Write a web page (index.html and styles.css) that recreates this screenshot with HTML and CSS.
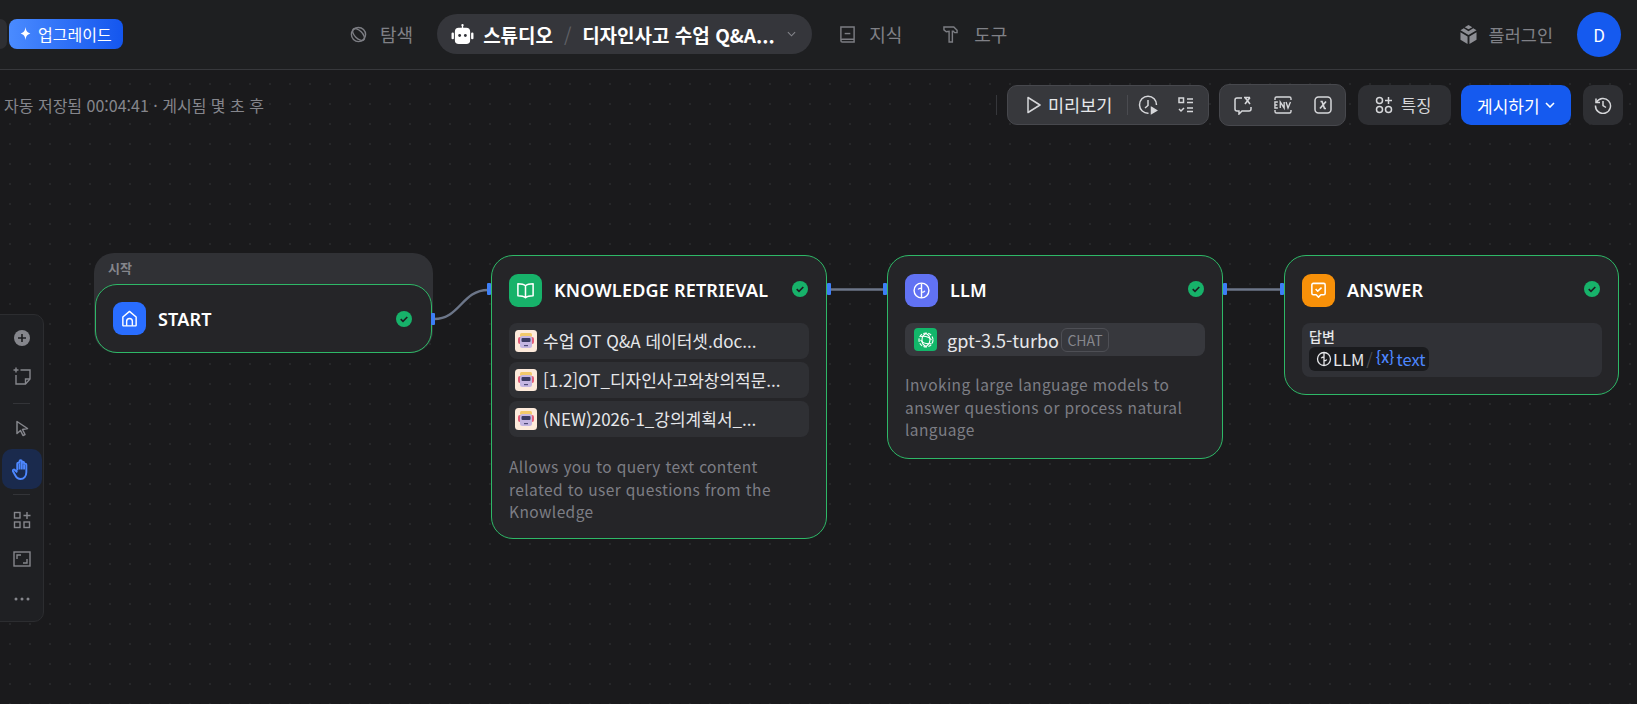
FILE: index.html
```html
<!DOCTYPE html>
<html lang="ko">
<head>
<meta charset="utf-8">
<title>디자인사고 수업 Q&amp;A</title>
<link rel="stylesheet" href="styles.css">
</head>
<body>
<header class="topbar">
  <div class="top-left">
    <span class="stub"></span>
    <a class="upgrade"><svg class="spark" viewBox="0 0 12 12"><path d="M6 0c.5 3.600 1.400 5 4.500 6C7.400 7 6.500 8.400 6 12 5.500 8.400 4.600 7 1.500 6 4.600 5 5.500 3.600 6 0z" fill="#fff"/></svg>업그레이드</a>
  </div>
  <nav class="top-nav">
    <a class="nav-link nav-explore"><svg class="nav-ico" viewBox="0 0 18 18" fill="none" stroke="#7c7d83" stroke-width="1.500"><circle cx="9" cy="9" r="7.500"/><ellipse cx="9" cy="9" rx="8" ry="4" transform="rotate(45 9 9)"/></svg>탐색</a>
    <div class="studio">
      <svg class="robot" viewBox="0 0 24 22"><path d="M12 0a1.200 1.200 0 0 1 .7 2.200V4h3.300a4 4 0 0 1 4 4v9a4 4 0 0 1-4 4H8a4 4 0 0 1-4-4V8a4 4 0 0 1 4-4h3.300V2.200A1.200 1.200 0 0 1 12 0z" fill="#fff"/><rect x="0.500" y="9" width="2.500" height="7" rx="1.200" fill="#fff"/><rect x="21" y="9" width="2.500" height="7" rx="1.200" fill="#fff"/><circle cx="9" cy="12" r="1.500" fill="#33343a"/><circle cx="15" cy="12" r="1.500" fill="#33343a"/></svg>
      <span class="studio-label">스튜디오</span>
      <span class="studio-sep">/</span>
      <span class="studio-title">디자인사고 수업 Q&amp;A...</span>
      <svg class="studio-chev" viewBox="0 0 10 6" fill="none" stroke="#85868c" stroke-width="1.200"><path d="M1 1l4 4 4-4"/></svg>
    </div>
    <a class="nav-link nav-know"><svg class="nav-ico" viewBox="0 0 18 20" fill="none" stroke="#7c7d83" stroke-width="1.500"><path d="M2 16V2h14v16H3.500A1.500 1.500 0 0 1 2 16.500 1.500 1.500 0 0 1 3.500 15H16"/><path d="M6 9h6"/></svg>지식</a>
    <a class="nav-link nav-tool"><svg class="nav-ico nav-ico-s" viewBox="0 0 16 20" fill="none" stroke="#7c7d83" stroke-width="1.500"><path d="M1 2h10.500L15 5.500v2.500h-2.500L11 6.500H10V18H6.500V6.500L3.500 7 1 5z"/></svg>도구</a>
  </nav>
  <div class="top-right">
    <a class="plugin"><svg class="plugin-ico" viewBox="0 0 18 20"><path d="M9 0l4 2.200L9 4.500 5 2.200z" fill="#8d8e94"/><path d="M9 6.500l5-3 3.500 2L9 10.500.5 5.500l3.500-2z" fill="#8d8e94"/><path d="M.5 7.500l7.500 4.500v8L.5 15.500zM17.500 7.500L10 12v8l7.500-4.500z" fill="#8d8e94"/></svg>플러그인</a>
    <span class="avatar">D</span>
  </div>
</header>

<main class="canvas">
  <div class="canvas-head">
    <p class="status">자동 저장됨 00:04:41 · 게시됨 몇 초 후</p>
    <div class="actions">
      <span class="act-sep"></span>
      <div class="group group-preview">
        <button class="preview-btn"><svg class="ico-16" viewBox="0 0 14 18" fill="none" stroke="#d6d7da" stroke-width="1.500"><path d="M1 1.500L13 9 1 16.500z" stroke-linejoin="round"/></svg>미리보기</button>
        <span class="group-div"></span>
        <svg class="ico-20 clock" viewBox="0 0 20 20" fill="none" stroke="#d6d7da" stroke-width="1.500"><path d="M10.500 18.200A8.500 8.500 0 1 1 18.500 10"/><path d="M10 5v5.500L7 13"/><path d="M13.500 12.500l5 3-5 3z" fill="#d6d7da"/></svg>
        <svg class="ico-18" viewBox="0 0 18 18" fill="none" stroke="#d6d7da" stroke-width="1.500"><rect x="2" y="2" width="4.500" height="4.500"/><path d="M10 3h6M10 6.500h6M10 12h6M10 15.500h6M2 13l2 2 3-3"/></svg>
      </div>
      <div class="group group-vars">
        <svg class="ico-20" viewBox="0 0 20 20" fill="none" stroke="#d6d7da" stroke-width="1.500"><path d="M9 3H4a2 2 0 0 0-2 2v9a2 2 0 0 0 2 2h2v3l3-3h7a2 2 0 0 0 2-2v-2"/><path d="M11 2.500h6M12 9l5-6.500M12 2.500L17 9" stroke-width="1.600"/></svg>
        <svg class="ico-22" viewBox="0 0 22 20" fill="none" stroke="#d6d7da" stroke-width="1.400"><path d="M3 5V3.500A1.500 1.500 0 0 1 4.500 2h13A1.500 1.500 0 0 1 19 3.500V5M3 15v1.500A1.500 1.500 0 0 0 4.500 18h13a1.500 1.500 0 0 0 1.500-1.500V15"/><path d="M5.500 7H2.500v6h3M2.500 10h2.500M8 13V7l4 6V7M14 7l2 6 2.500-6" transform="translate(.5 0) scale(.97 1)"/></svg>
        <svg class="ico-20" viewBox="0 0 20 20" fill="none" stroke="#d6d7da" stroke-width="1.500"><rect x="2" y="2" width="16" height="16" rx="3.500"/><path d="M7.500 6.500h1.500l2.500 7h1.500M13 6.500l-6 7" stroke-width="1.700"/></svg>
      </div>
      <button class="feature"><svg class="ico-18" viewBox="0 0 18 18" fill="none" stroke="#d6d7da" stroke-width="1.500"><circle cx="4.500" cy="4.500" r="3"/><circle cx="4.500" cy="13.500" r="3"/><circle cx="13.500" cy="13.500" r="3"/><path d="M13.500 1v7M10 4.500h7"/></svg>특징</button>
      <button class="publish">게시하기<svg class="pub-chev" viewBox="0 0 10 6" fill="none" stroke="#fff" stroke-width="1.600"><path d="M1 1l4 4 4-4"/></svg></button>
      <button class="history"><svg class="ico-18" viewBox="0 0 18 18" fill="none" stroke="#d6d7da" stroke-width="1.500"><path d="M2 2.500v4h4"/><path d="M2.300 6.500A7.500 7.500 0 1 1 1.500 9.500"/><path d="M9 5v4.500l3 2"/></svg></button>
    </div>
  </div>

  <svg class="edges" viewBox="0 0 1637 635" fill="none">
    <path class="edge" d="M434 249C460 249 462 220 488 220"/>
    <path class="edge" d="M827 219.500H887"/>
    <path class="edge" d="M1223 219.500H1284"/>
  </svg>

  <aside class="tools">
    <svg class="tool-ico" viewBox="0 0 18 18"><circle cx="9" cy="9" r="8" fill="#85868c"/><path d="M9 5v8M5 9h8" stroke="#1d1e20" stroke-width="1.600"/></svg>
    <svg class="tool-ico" viewBox="0 0 18 18" fill="none" stroke="#85868c" stroke-width="1.400"><path d="M7.500 3H17v9l-4.500 5H3V8"/><path d="M12.500 17v-5H17M3 .5v5M.5 3h5"/></svg>
    <span class="tool-div"></span>
    <svg class="tool-ico" viewBox="0 0 18 18" fill="none" stroke="#85868c" stroke-width="1.500"><path d="M4 1.500l10.500 7-5 1 2.500 5-2 1-2.500-5L4 13.500z" stroke-linejoin="round"/></svg>
    <span class="tool-active"><svg class="tool-hand" viewBox="0 0 20 22" fill="none" stroke="#4d87ff" stroke-width="2" stroke-linejoin="round"><path d="M5.500 12V5a1.200 1.200 0 0 1 2.400 0M7.900 5V2.500a1.200 1.200 0 0 1 2.400 0V5M10.300 4a1.200 1.200 0 0 1 2.400 0v2M12.700 6a1.200 1.200 0 0 1 2.400 0v8c0 4-2.600 7-6.100 7-2.900 0-4.300-1.500-5.600-4L1 12.800c-.6-1.300 1-2.300 2-1.300l2.500 2.500"/><path d="M7.900 5v6M10.300 4v7M12.700 6v5"/></svg></span>
    <span class="tool-div"></span>
    <svg class="tool-ico" viewBox="0 0 18 18" fill="none" stroke="#85868c" stroke-width="1.400"><rect x="1.500" y="1.500" width="5.500" height="5.500"/><rect x="1.500" y="11" width="5.500" height="5.500"/><rect x="11" y="11" width="5.500" height="5.500"/><path d="M14 1v7M10.500 4.500h7"/></svg>
    <svg class="tool-ico" viewBox="0 0 18 18" fill="none" stroke="#85868c" stroke-width="1.400"><rect x="1" y="2" width="16" height="14"/><path d="M4 9V5h4M14 9v4h-4"/></svg>
    <svg class="tool-ico" viewBox="0 0 18 18" fill="#85868c"><circle cx="3" cy="9" r="1.500"/><circle cx="9" cy="9" r="1.500"/><circle cx="15" cy="9" r="1.500"/></svg>
  </aside>

  <div class="start-group">
    <span class="start-label">시작</span>
    <section class="node node-start">
      <div class="node-head">
        <span class="node-ico bg-blue"><svg viewBox="0 0 20 20" fill="none" stroke="#fff" stroke-width="1.500" stroke-linejoin="round"><path d="M3 8.500L10 2.500l7 6V17a.8.8 0 0 1-.8.8H3.800A.8.8 0 0 1 3 17z"/><path d="M7 17.500V13a3 3 0 0 1 6 0v4.500"/></svg></span>
        <h3 class="node-title">START</h3>
        <svg class="check" viewBox="0 0 16 16"><circle cx="8" cy="8" r="8" fill="#17b26a"/><path d="M4.700 8.200l2.300 2.200 4.300-4.400" fill="none" stroke="#1d1e22" stroke-width="1.600"/></svg>
      </div>
    </section>
    <span class="handle handle-start"></span>
  </div>

  <section class="node node-kr">
    <span class="handle handle-in"></span>
    <span class="handle handle-out"></span>
    <div class="node-head">
      <span class="node-ico bg-green"><svg viewBox="0 0 20 20" fill="none" stroke="#fff" stroke-width="1.600" stroke-linejoin="round"><path d="M10 5c-1.500-1.300-4-2-8-2v12.500c4 0 6.500.7 8 2 1.500-1.300 4-2 8-2V3c-4 0-6.500.7-8 2zM10 5v12.500"/></svg></span>
      <h3 class="node-title">KNOWLEDGE RETRIEVAL</h3>
      <svg class="check" viewBox="0 0 16 16"><circle cx="8" cy="8" r="8" fill="#17b26a"/><path d="M4.700 8.200l2.300 2.200 4.300-4.400" fill="none" stroke="#1d1e22" stroke-width="1.600"/></svg>
    </div>
    <ul class="files">
      <li class="file"><svg class="bot" viewBox="0 0 22 22"><rect width="22" height="22" rx="3.500" fill="#fdeadb"/><rect x="5" y="3" width="12" height="4" rx="1.500" fill="#f2c96b"/><rect x="3" y="7" width="16" height="7" rx="2" fill="#e25d78"/><rect x="5" y="6" width="12" height="12" rx="2.500" fill="#c4b6e2"/><rect x="6.500" y="8" width="9" height="4" rx="1" fill="#3a3b63"/><rect x="9" y="15" width="4" height="1.200" fill="#4e4a78"/></svg><span class="file-name">수업 OT Q&amp;A 데이터셋.doc...</span></li>
      <li class="file"><svg class="bot" viewBox="0 0 22 22"><rect width="22" height="22" rx="3.500" fill="#fdeadb"/><rect x="5" y="3" width="12" height="4" rx="1.500" fill="#f2c96b"/><rect x="3" y="7" width="16" height="7" rx="2" fill="#e25d78"/><rect x="5" y="6" width="12" height="12" rx="2.500" fill="#c4b6e2"/><rect x="6.500" y="8" width="9" height="4" rx="1" fill="#3a3b63"/><rect x="9" y="15" width="4" height="1.200" fill="#4e4a78"/></svg><span class="file-name">[1.2]OT_디자인사고와창의적문...</span></li>
      <li class="file"><svg class="bot" viewBox="0 0 22 22"><rect width="22" height="22" rx="3.500" fill="#fdeadb"/><rect x="5" y="3" width="12" height="4" rx="1.500" fill="#f2c96b"/><rect x="3" y="7" width="16" height="7" rx="2" fill="#e25d78"/><rect x="5" y="6" width="12" height="12" rx="2.500" fill="#c4b6e2"/><rect x="6.500" y="8" width="9" height="4" rx="1" fill="#3a3b63"/><rect x="9" y="15" width="4" height="1.200" fill="#4e4a78"/></svg><span class="file-name">(NEW)2026-1_강의계획서_...</span></li>
    </ul>
    <p class="desc">Allows you to query text content related to user questions from the Knowledge</p>
  </section>

  <section class="node node-llm">
    <span class="handle handle-in"></span>
    <span class="handle handle-out"></span>
    <div class="node-head">
      <span class="node-ico bg-indigo"><svg viewBox="0 0 20 20" fill="none" stroke="#fff" stroke-width="1.500"><circle cx="10" cy="10" r="7.800"/><path d="M10 2.500v15M10 7.500c-1.500 0-3 .3-3.500 1.500M10 12c1.500 0 3-.5 3.500-1.800"/></svg></span>
      <h3 class="node-title">LLM</h3>
      <svg class="check" viewBox="0 0 16 16"><circle cx="8" cy="8" r="8" fill="#17b26a"/><path d="M4.700 8.200l2.300 2.200 4.300-4.400" fill="none" stroke="#1d1e22" stroke-width="1.600"/></svg>
    </div>
    <div class="model">
      <span class="model-ico"><svg viewBox="0 0 20 20" fill="none" stroke="#fff" stroke-width="1.100"><circle cx="10" cy="10" r="7" stroke-dasharray="3.500 1.500"/><path d="M10 3.500c2.500 1.500 4 2.500 4 6.500s-2 5-4 6.500c-2.500-1.500-4-2.500-4-6.500s1.500-5 4-6.500z"/><path d="M4.500 6.500c3-.5 8-.5 11 3.500M15.500 13.500c-3 .5-8 .5-11-3.500"/></svg></span>
      <span class="model-name">gpt-3.5-turbo</span>
      <span class="chat">CHAT</span>
    </div>
    <p class="desc desc-llm">Invoking large language models to answer questions or process natural language</p>
  </section>

  <section class="node node-answer">
    <span class="handle handle-in"></span>
    <div class="node-head">
      <span class="node-ico bg-orange"><svg viewBox="0 0 20 20" fill="none" stroke="#fff" stroke-width="1.600" stroke-linejoin="round"><path d="M4.500 2.500h11a1.500 1.500 0 0 1 1.500 1.500v9a1.500 1.500 0 0 1-1.500 1.500H12.500L10 17l-2.500-2.500h-3A1.500 1.500 0 0 1 3 13V4a1.500 1.500 0 0 1 1.500-1.500z"/><path d="M7 8.500l2.200 2.200L13.200 7"/></svg></span>
      <h3 class="node-title">ANSWER</h3>
      <svg class="check" viewBox="0 0 16 16"><circle cx="8" cy="8" r="8" fill="#17b26a"/><path d="M4.700 8.200l2.300 2.200 4.300-4.400" fill="none" stroke="#1d1e22" stroke-width="1.600"/></svg>
    </div>
    <div class="answer-box">
      <span class="answer-label">답변</span>
      <span class="var-pill">
        <svg class="var-ico" viewBox="0 0 16 16" fill="none" stroke="#e6e7ea" stroke-width="1.300"><circle cx="8" cy="8" r="6.500"/><path d="M8 2v12M8 6c-1.200 0-2.300.3-2.700 1.200M8 10c1.200 0 2.300-.4 2.700-1.400"/></svg>
        <span class="var-node">LLM</span><span class="var-sep">/</span><span class="var-x">{x}</span><span class="var-text">text</span>
      </span>
    </div>
  </section>
</main>
</body>
</html>
```

FILE: styles.css
```css
* { box-sizing: border-box; }
html, body { margin: 0; padding: 0; height: 100%; }
body {
  width: 1637px;
  height: 704px;
  overflow: hidden;
  background: #1a1a1c;
  font-family: "Noto Sans CJK KR", "Noto Sans", sans-serif;
  color: #e6e7ea;
  font-size: 14px;
}
svg { display: block; flex: none; }
button { font: inherit; border: 0; color: inherit; padding: 0; }
h3, p, ul { margin: 0; padding: 0; }
ul { list-style: none; }

/* top bar */
.topbar {
  height: 70px;
  padding-bottom: 1px;
  display: flex;
  align-items: center;
  background: #1e1f21;
  border-bottom: 1px solid #37383c;
  position: relative;
}
.top-left { display: flex; align-items: center; gap: 2px; width: 350px; flex: none; margin-top: -1px; }
.stub { width: 7px; height: 30px; background: #2e2f33; border-radius: 0 8px 8px 0; }
.upgrade {
  display: flex;
  align-items: center;
  gap: 6px;
  width: 114px;
  height: 30px;
  padding-left: 10px;
  border-radius: 8px;
  background: linear-gradient(90deg, #4a8bff, #1456ee);
  color: #fff;
  font-size: 16px;
  line-height: 20px;
  white-space: nowrap;
}
.spark { width: 13px; height: 13px; }
.top-nav { display: flex; align-items: center; }
.nav-link { display: flex; align-items: center; color: #808187; font-size: 18px; line-height: 24px; white-space: nowrap; }
.nav-ico { width: 17px; height: 19px; margin-right: 13px; }
.nav-ico-s { width: 15px; margin-right: 16px; }
.nav-explore { margin-right: 24px; }
.nav-know { margin-left: 27px; margin-right: 41px; }
.studio {
  width: 375px;
  height: 40px;
  padding-left: 14px;
  display: flex;
  align-items: center;
  background: #35363b;
  border-radius: 20px;
  color: #fff;
  font-weight: 700;
  font-size: 19px;
  white-space: nowrap;
}
.robot { width: 23px; height: 21px; margin-right: 9px; }
.studio-label { width: 70px; }
.studio-sep { width: 29px; text-align: center; color: #5f6066; font-weight: 400; }
.studio-title { width: 193px; }
.studio-chev { width: 9px; height: 6px; margin-left: 12px; }
.top-right { display: flex; align-items: center; margin-left: auto; padding-right: 16px; }
.plugin { display: flex; align-items: center; gap: 12px; color: #808187; font-size: 17.500px; margin-right: 24px; white-space: nowrap; }
.plugin-ico { width: 17px; height: 19px; }
.avatar {
  width: 44px;
  height: 45px;
  border-radius: 50%;
  background: #155aef;
  color: #fff;
  font-size: 17px;
  display: flex;
  align-items: center;
  justify-content: center;
}

/* canvas */
.canvas {
  position: relative;
  height: 634px;
  overflow: hidden;
  background-color: #1a1a1c;
  background-image: radial-gradient(circle, #262729 0.9px, transparent 1.1px);
  background-size: 20px 20px;
  background-position: 0 4px;
}
.canvas-head {
  position: relative;
  z-index: 2;
  display: flex;
  align-items: center;
  justify-content: space-between;
  height: 42px;
  margin-top: 14px;
  padding: 0 14px 0 4px;
}
.status { color: #85868c; font-size: 16px; line-height: 20px; white-space: nowrap; }
.actions { display: flex; align-items: center; }
.act-sep { width: 1px; height: 20px; background: #36373b; margin-right: 10px; }
.group {
  display: flex;
  align-items: center;
  background: #37383c;
  border: 1px solid #47484d;
  border-radius: 10px;
  color: #e6e7ea;
}
.group-preview { width: 202px; height: 40px; padding-left: 19px; margin-right: 10px; }
.group-vars { width: 127px; height: 42px; padding: 0 12px 0 13px; justify-content: space-between; margin-right: 12px; }
.preview-btn { display: flex; align-items: center; gap: 7px; background: none; font-size: 17.500px; line-height: 22px; white-space: nowrap; color: #e6e7ea; }
.group-div { width: 1px; height: 20px; background: #4a4b50; margin: 0 10px 0 15px; }
.clock { margin-right: 19px; }
.ico-16 { width: 14px; height: 18px; }
.ico-18 { width: 18px; height: 18px; }
.ico-20 { width: 20px; height: 20px; }
.ico-22 { width: 22px; height: 20px; }
.feature {
  width: 93px;
  height: 40px;
  display: flex;
  align-items: center;
  padding-left: 17px;
  gap: 8px;
  background: #2e2f33;
  border-radius: 10px;
  font-size: 16.500px;
  white-space: nowrap;
  color: #d6d7da;
  margin-right: 10px;
}
.publish {
  width: 110px;
  height: 40px;
  display: flex;
  align-items: center;
  padding-left: 16px;
  gap: 5px;
  background: #155aef;
  border-radius: 10px;
  color: #fff;
  font-size: 17px;
  white-space: nowrap;
  margin-right: 12px;
}
.pub-chev { width: 10px; height: 6px; }
.history {
  width: 40px;
  height: 40px;
  display: flex;
  align-items: center;
  justify-content: center;
  background: #2e2f33;
  border-radius: 10px;
}

.edges { position: absolute; left: 0; top: 0; width: 1637px; height: 635px; }
.edge { stroke: #6c7689; stroke-width: 2.500; }

/* left tools */
.tools {
  position: absolute;
  left: -1px;
  top: 244px;
  width: 45px;
  height: 308px;
  border: 1px solid #2c2d30;
  border-radius: 0 10px 10px 0;
  background: #1f2023;
  display: flex;
  flex-direction: column;
  align-items: center;
}
.tool-ico { width: 18px; height: 18px; position: relative; left: 0; }
.tools > .tool-ico:nth-child(1) { margin-top: 14px; }
.tools > .tool-ico:nth-child(2) { margin-top: 20px; }
.tools > .tool-ico:nth-child(4) { margin-top: 16px; }
.tools > .tool-ico:nth-child(7) { margin-top: 16px; }
.tools > .tool-ico:nth-child(8) { margin-top: 21px; }
.tools > .tool-ico:nth-child(9) { margin-top: 22px; }
.tool-div { width: 17px; height: 1px; background: #333438; margin-top: 18px; }
.tool-div:nth-child(6) { margin-top: 5px; }
.tool-active {
  width: 40px;
  height: 40px;
  margin-top: 11px;
  border-radius: 10px;
  background: #1a2a4d;
  display: flex;
  align-items: center;
  justify-content: center;
}
.tool-hand { width: 19px; height: 21px; }

/* nodes */
.node {
  position: absolute;
  background: #252528;
  border: 1.500px solid #2eb867;
  border-radius: 22px;
  padding: 18px 17px 0;
}
.node-head { display: flex; align-items: center; height: 33px; }
.node-ico {
  width: 33px;
  height: 33px;
  border-radius: 9px;
  display: flex;
  align-items: center;
  justify-content: center;
  flex: none;
}
.node-ico svg { width: 19px; height: 19px; }
.bg-blue { background: #296dff; }
.bg-green { background: #17b26a; }
.bg-indigo { background: #6172f3; }
.bg-orange { background: #f79009; }
.node-title {
  margin-left: 12px;
  margin-top: -2px;
  font-family: "Noto Sans", sans-serif;
  font-size: 18px;
  font-weight: 600;
  letter-spacing: 0.2px;
  color: #fff;
  line-height: 22px;
  white-space: nowrap;
}
.node-start .node-title { margin-top: 0; }
.check { width: 16px; height: 16px; margin-left: auto; margin-right: 1px; margin-top: -3px; }

.start-group {
  position: absolute;
  left: 94px;
  top: 183px;
  width: 339px;
  height: 100px;
  background: #303135;
  border-radius: 20px 20px 22px 22px;
}
.start-label { position: absolute; left: 14px; top: 5px; color: #85868c; font-size: 13px; font-weight: 700; line-height: 20px; }
.node-start { left: 1px; top: 31px; width: 337px; height: 69px; padding: 17px 17px 0; }
.node-start .check { margin-right: 2px; margin-top: 0; }
.node-kr { left: 491px; top: 185px; width: 336px; height: 284px; }
.node-llm { left: 887px; top: 185px; width: 336px; height: 204px; }
.node-answer { left: 1284px; top: 185px; width: 335px; height: 140px; }

.handle { position: absolute; width: 4px; height: 12px; background: #3d7ef6; border-radius: 1px; z-index: 1; }
.handle-in { left: -5px; top: 27px; }
.handle-out { right: -5px; top: 27px; }
.handle-start { left: 337px; top: 60px; }

.files { margin-top: 16px; display: flex; flex-direction: column; gap: 3px; }
.file {
  height: 36px;
  width: 300px;
  display: flex;
  align-items: center;
  padding-left: 6px;
  gap: 6px;
  background: #2f3034;
  border-radius: 8px;
}
.bot { width: 22px; height: 22px; }
.file-name { color: #e6e7ea; font-size: 17px; line-height: 22px; white-space: nowrap; }
.desc {
  margin-top: 18px;
  width: 290px;
  color: #7d7e85;
  font-size: 15.500px;
  line-height: 22.500px;
  letter-spacing: 0.4px;
}
.desc-llm { margin-top: 17px; }

.model {
  margin-top: 16px;
  width: 300px;
  height: 33px;
  display: flex;
  align-items: center;
  padding-left: 9px;
  background: #37383d;
  border-radius: 8px;
}
.model-ico {
  width: 23px;
  height: 23px;
  border-radius: 4px;
  background: #12b76a;
  display: flex;
  align-items: center;
  justify-content: center;
}
.model-ico svg { width: 20px; height: 20px; }
.model-name { margin-left: 10px; width: 114px; font-size: 18px; color: #e6e7ea; white-space: nowrap; line-height: 22px; }
.chat {
  width: 48px;
  height: 24px;
  border: 1px solid #4e4f55;
  border-radius: 6px;
  color: #85868c;
  font-size: 14px;
  line-height: 22px;
  text-align: center;
}

.answer-box {
  margin-top: 16px;
  width: 300px;
  height: 54px;
  background: #303136;
  border-radius: 8px;
  padding: 3px 7px 0;
  display: flex;
  flex-direction: column;
  align-items: flex-start;
}
.answer-label { color: #e6e7ea; font-size: 14px; font-weight: 500; line-height: 20px; }
.var-pill {
  margin-top: 1px;
  width: 120px;
  height: 24px;
  display: flex;
  align-items: center;
  padding-left: 7px;
  background: #1a1b1e;
  border-radius: 6px;
  font-size: 16.500px;
  line-height: 22px;
  white-space: nowrap;
}
.var-ico { width: 16px; height: 16px; margin-right: 1px; }
.var-node { color: #e6e7ea; }
.var-sep { color: #4c4d52; margin: 0 3px 0 2px; }
.var-x { color: #4d87ff; font-size: 15px; font-weight: 500; margin-right: 2px; position: relative; top: -2px; }
.var-text { color: #4d87ff; }
```
